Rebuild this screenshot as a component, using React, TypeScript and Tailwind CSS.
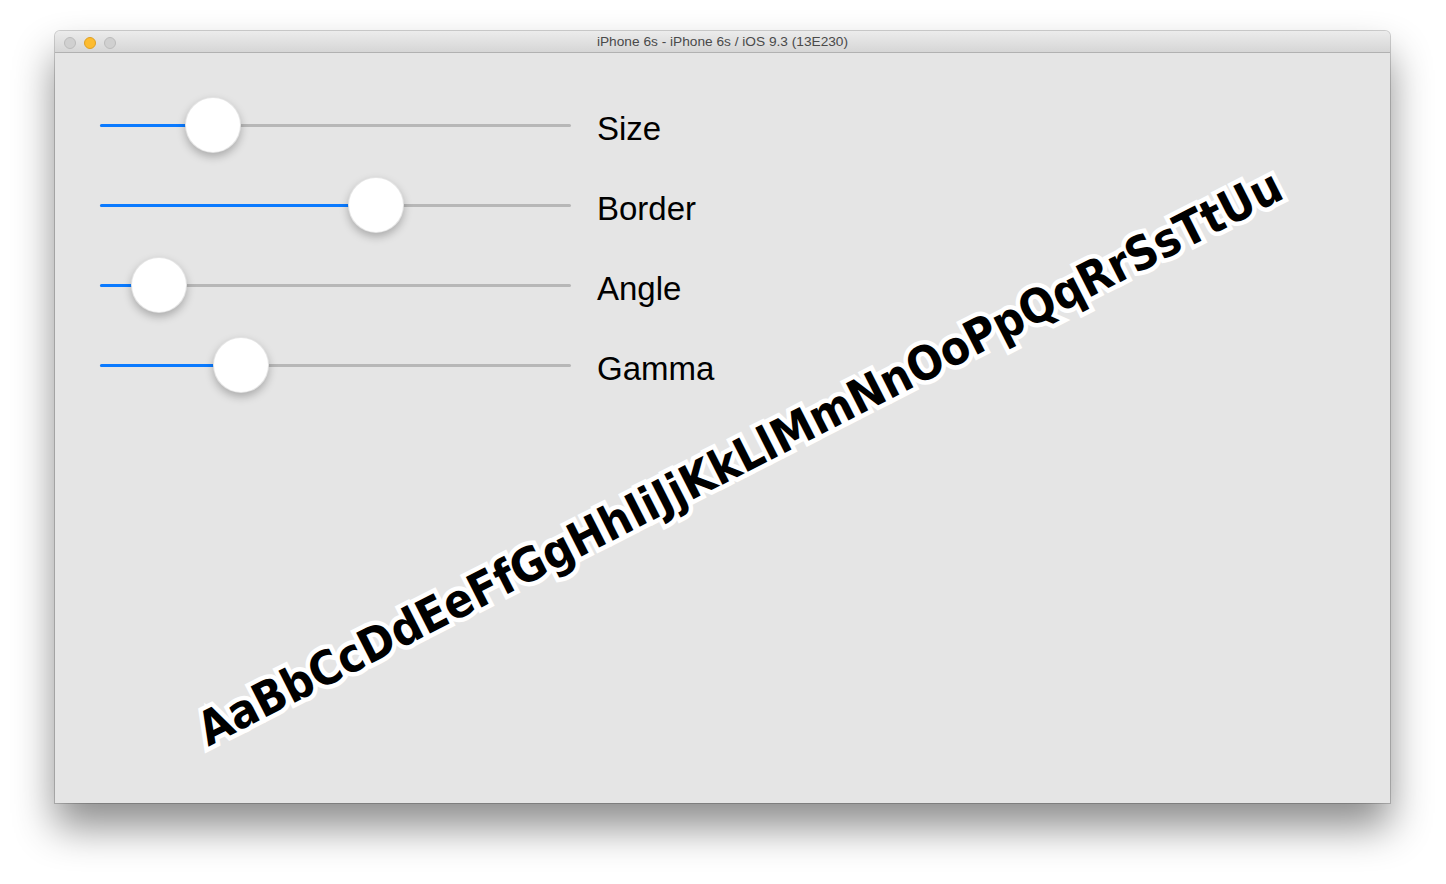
const sliders = [
  { label: 'Size', thumb: 113 },
  { label: 'Border', thumb: 276 },
  { label: 'Angle', thumb: 59 },
  { label: 'Gamma', thumb: 141 },
];

function Slider({ value }: { value: number }) {
  // value = thumb centre in px from the track start (track is 471px)
  return (
    <div className="relative h-14 w-[471px] flex items-center">
      <div className="h-[3px] w-full rounded-full bg-[#b7b7b7]" />
      <div
        className="absolute left-0 h-[3px] rounded-full bg-[#0a7aff]"
        style={{ width: value }}
      />
      <div
        className="absolute top-0 h-14 w-14 -translate-x-1/2 rounded-full bg-white border border-black/10 shadow-[0_4px_8px_rgba(0,0,0,0.25)]"
        style={{ left: value }}
      />
    </div>
  );
}

export default function App() {
  return (
    <div className="w-[1446px] h-[884px] bg-white pl-[55px] pt-[31px] font-['Liberation_Sans',Arial,sans-serif]">
      <div className="w-[1335px] h-[772px] flex flex-col bg-[#e5e5e5] shadow-[0_24px_40px_rgba(0,0,0,0.45),0_0_0_1px_rgba(0,0,0,0.18)] rounded-t-[5px] overflow-hidden">
        {/* Title bar */}
        <div className="relative h-[22px] flex items-center justify-center bg-gradient-to-b from-[#ececec] to-[#d6d6d6] border-b border-[#b1b1b1]">
          <div className="absolute left-[9px] top-[6px] flex gap-[8px]">
            <span className="w-3 h-3 rounded-full bg-[#d0d0d0] border border-[#bcbcbc]" />
            <span className="w-3 h-3 rounded-full bg-[#fdbc30] border border-[#dfa023]" />
            <span className="w-3 h-3 rounded-full bg-[#d0d0d0] border border-[#bcbcbc]" />
          </div>
          <span className="pt-[2px] text-[13.7px] text-[#4a4a4a] font-['Liberation_Sans',sans-serif]">
            iPhone 6s - iPhone 6s / iOS 9.3 (13E230)
          </span>
        </div>

        {/* Content */}
        <div className="relative flex-1">
          <div className="flex flex-col pt-[32px] pl-[45px]">
            {sliders.map((s) => (
              <div key={s.label} className="h-20 flex items-center gap-[26px]">
                <Slider value={s.thumb} />
                <span className="text-[33px] text-black leading-none pt-[6px]">{s.label}</span>
              </div>
            ))}
          </div>

          <div className="absolute left-[685px] top-[405px] -translate-x-1/2 -translate-y-1/2 rotate-[-27deg] whitespace-nowrap font-['DejaVu_Sans_Condensed','DejaVu_Sans',sans-serif] [font-stretch:condensed] font-bold text-[47px] text-black [paint-order:stroke_fill] [-webkit-text-stroke:9px_white]">
            AaBbCcDdEeFfGgHhIiJjKkLlMmNnOoPpQqRrSsTtUu
          </div>
        </div>
      </div>
    </div>
  );
}
